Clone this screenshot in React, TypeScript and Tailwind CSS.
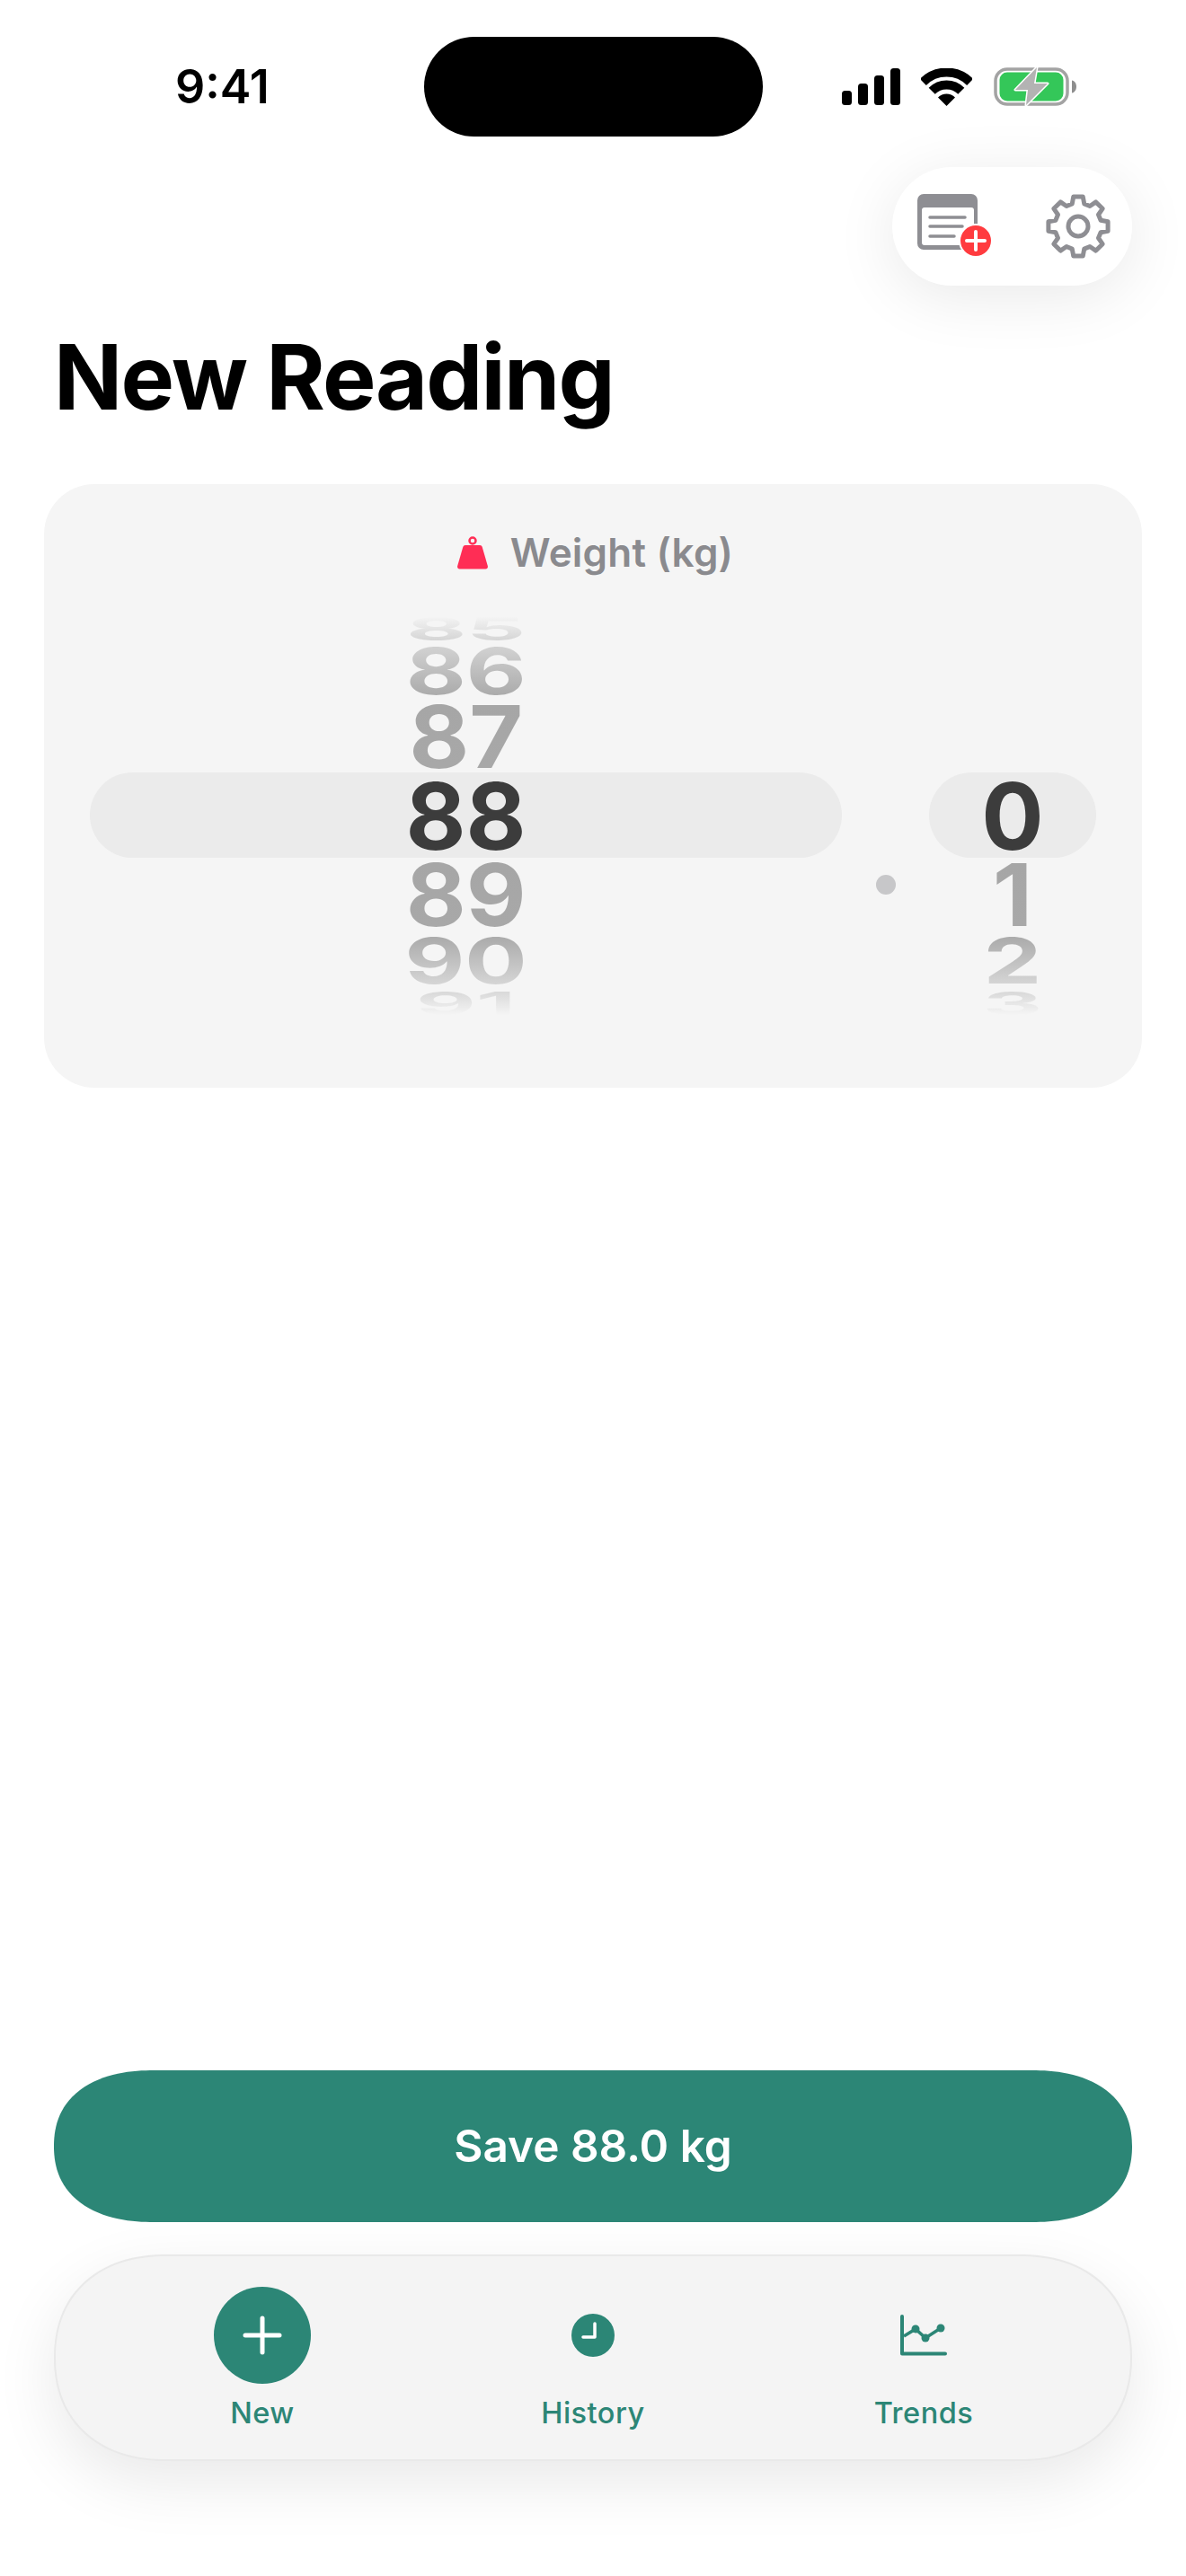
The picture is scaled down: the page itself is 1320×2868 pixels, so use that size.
import React from 'react';

const gearPath = () => {
  const cx = 40;
  const cy = 40;
  const pts: string[] = [];
  for (let i = 0; i < 8; i++) {
    const a = (i * 45 - 90) * (Math.PI / 180);
    const step = (deg: number, r: number) => {
      const t = a + deg * (Math.PI / 180);
      pts.push(`${(cx + r * Math.cos(t)).toFixed(2)} ${(cy + r * Math.sin(t)).toFixed(2)}`);
    };
    step(-15, 26);
    step(-9, 33.500);
    step(9, 33.500);
    step(15, 26);
  }
  return 'M' + pts.join('L') + 'Z';
};

const StatusIcons = () => (
  <div className="flex items-center">
    <svg width="65" height="41" viewBox="0 0 65 41" fill="#000">
      <rect x="0" y="25" width="11" height="16" rx="3.5" />
      <rect x="18" y="17" width="11" height="24" rx="3.5" />
      <rect x="36" y="8" width="11" height="33" rx="3.5" />
      <rect x="54" y="0" width="11" height="41" rx="3.5" />
    </svg>
    <svg className="ml-[23px]" width="57" height="42" viewBox="0 0 57 42">
      <path d="M2.3 15.4A37 37 0 0 1 54.7 15.4" fill="none" stroke="#000" strokeWidth="10" />
      <path d="M12.2 25.2A23 23 0 0 1 44.8 25.2" fill="none" stroke="#000" strokeWidth="10" />
      <path d="M28.5 42L19 32.5A13.4 13.4 0 0 1 38 32.5Z" fill="#000" />
    </svg>
    <svg className="ml-[24px]" width="92" height="43" viewBox="0 0 92 43">
      <rect x="2" y="2" width="80" height="39" rx="13" fill="none" stroke="#a3a3a3" strokeWidth="3.5" />
      <rect x="6.5" y="5.5" width="71" height="32" rx="8.5" fill="#34c759" />
      <path d="M87 14.5c3 .6 5 3.400 5 7s-2 6.400-5 7z" fill="#8e8e8e" />
      <path d="M48 0L24 25H38L36 42L60 18H45Z" fill="#b3b3b3" stroke="#fff" strokeWidth="3" strokeLinejoin="round" paintOrder="stroke" />
    </svg>
  </div>
);

const ReportIcon = () => (
  <svg width="86" height="72" viewBox="0 0 86 72">
    <rect x="0" y="0" width="67" height="62" rx="7" fill="#8e8e93" />
    <rect x="5" y="15" width="58" height="42" rx="3" fill="#fff" />
    <path d="M14 26H53M14 36H50M14 47H41" stroke="#8e8e93" strokeWidth="3.500" strokeLinecap="round" />
    <circle cx="65" cy="52" r="19" fill="#fff" />
    <circle cx="65" cy="52" r="17" fill="#ff3b3f" />
    <path d="M55 52H75M65 42V62" stroke="#fff" strokeWidth="4" strokeLinecap="round" />
  </svg>
);

const GearIcon = () => (
  <svg width="80" height="80" viewBox="0 0 80 80" fill="none" stroke="#8e8e93" strokeWidth="5" strokeLinejoin="round">
    <path d={gearPath()} />
    <circle cx="40" cy="40" r="11" />
  </svg>
);

const WeightIcon = () => (
  <svg width="34" height="38" viewBox="0 0 34 38">
    <circle cx="17" cy="6" r="3.500" fill="none" stroke="#ff2d55" strokeWidth="2.500" />
    <path d="M9 11H25C26.500 11 27.300 11.800 27.700 13L33.800 34C34.300 36 33.300 37.500 31.500 37.500H2.500C.700 37.500-.300 36 .200 34L6.300 13C6.700 11.800 7.500 11 9 11Z" fill="#ff2d55" />
  </svg>
);

const digitBase = "inline-block text-[103px] leading-none font-bold bg-clip-text text-transparent";

const LeftWheel = () => (
  <div className="flex flex-col items-center relative z-10">
    <div className="h-[37px] flex items-center"><span className={`${digitBase} scale-y-[0.35] bg-gradient-to-b from-[#f4f4f4] from-15% to-[#d6d6d6] to-85%`}>85</span></div>
    <div className="h-[58px] flex items-center"><span className={`${digitBase} scale-y-[0.69] bg-gradient-to-b from-[#d0d0d0] from-15% to-[#acacac] to-85%`}>86</span></div>
    <div className="h-[88px] flex items-center"><span className={`${digitBase} scale-y-[0.93] bg-gradient-to-b from-[#a6a6a6] from-15% to-[#a8a8a8] to-85%`}>87</span></div>
    <div className="h-[88px] flex items-center"><span className={`${digitBase} bg-gradient-to-b from-[#3c3c3c] to-[#3c3c3c]`}>88</span></div>
    <div className="h-[88px] flex items-center"><span className={`${digitBase} scale-y-[0.93] bg-gradient-to-b from-[#a6a6a6] from-15% to-[#a8a8a8] to-85%`}>89</span></div>
    <div className="h-[59px] flex items-center"><span className={`${digitBase} scale-y-[0.68] bg-gradient-to-b from-[#acacac] from-15% to-[#d4d4d4] to-85%`}>90</span></div>
    <div className="h-[34px] flex items-center"><span className={`${digitBase} scale-y-[0.35] bg-gradient-to-b from-[#d8d8d8] from-15% to-[#f4f4f4] to-85%`}>91</span></div>
  </div>
);

const RightWheel = () => (
  <div className="flex flex-col items-center relative z-10">
    <div className="h-[183px]" />
    <div className="h-[88px] flex items-center"><span className={`${digitBase} bg-gradient-to-b from-[#3c3c3c] to-[#3c3c3c]`}>0</span></div>
    <div className="h-[88px] flex items-center"><span className={`${digitBase} scale-y-[0.93] bg-gradient-to-b from-[#a6a6a6] from-15% to-[#a8a8a8] to-85%`}>1</span></div>
    <div className="h-[59px] flex items-center"><span className={`${digitBase} scale-y-[0.68] bg-gradient-to-b from-[#acacac] from-15% to-[#d4d4d4] to-85%`}>2</span></div>
    <div className="h-[34px] flex items-center"><span className={`${digitBase} scale-y-[0.35] bg-gradient-to-b from-[#d8d8d8] from-15% to-[#f4f4f4] to-85%`}>3</span></div>
  </div>
);

const TabItem = ({ label, children }: { label: string; children: React.ReactNode }) => (
  <div className="flex flex-col items-center">
    <div className="h-[124px] flex items-center justify-center">{children}</div>
    <span className="mt-[3px] text-[32.5px] leading-[44px] font-medium text-[#2c8676] tracking-[0.5px]">{label}</span>
  </div>
);

export default function App() {
  return (
    <div className="relative w-[1320px] h-[2868px] bg-white flex flex-col overflow-hidden font-['Inter',sans-serif]">
      {/* dynamic island */}
      <div className="absolute left-[472px] top-[41px] w-[377px] h-[111px] rounded-full bg-black" />

      <div className="h-[186px] flex justify-between items-start pl-[195px] pr-[122px] pt-[70px]">
        <span className="text-[52px] leading-[54px] font-semibold text-black">9:41</span>
        <div className="mt-[5px]">
          <StatusIcons />
        </div>
      </div>

      <div className="flex justify-end pr-[60px]">
        <div className="w-[267px] h-[132px] rounded-full bg-white shadow-[0_12px_70px_rgba(0,0,0,0.09)] flex items-start pl-[28px] pt-[30px]">
          <ReportIcon />
          <div className="ml-[53px] -mt-[4px]">
            <GearIcon />
          </div>
        </div>
      </div>

      <h1 className="pl-[60px] mt-[42px] text-[100px] leading-[120px] font-bold text-black tracking-[-1.7px]">New Reading</h1>

      <div className="mx-[49px] mt-[59px] h-[672px] rounded-[56px] bg-[#f5f5f5] px-[51px] pt-[56px]">
        <div className="flex items-center justify-center h-[40px] pl-[5px]">
          <WeightIcon />
          <span className="ml-[25px] text-[44px] leading-none font-semibold text-[#8a8a8e] tracking-[0.2px]">Weight (kg)</span>
        </div>
        <div className="mt-[46px] flex">
          <div className="relative w-[838px] h-[452px] flex justify-center">
            <div className="absolute left-0 right-0 top-[179px] h-[95px] rounded-full bg-[#ebebeb]" />
            <LeftWheel />
          </div>
          <div className="w-[97px] flex justify-center pt-[293px]">
            <div className="w-[22px] h-[22px] rounded-full bg-[#c7c7c9]" />
          </div>
          <div className="relative w-[186px] h-[452px] flex justify-center">
            <div className="absolute left-0 right-0 top-[179px] h-[95px] rounded-full bg-[#ebebeb]" />
            <RightWheel />
          </div>
        </div>
      </div>

      <div className="mt-auto px-[60px] pb-[128px]">
        <button className="w-full h-[169px] rounded-[112px/85px] [corner-shape:superellipse(1.2)] bg-[#2c8676] text-white text-[49.5px] font-semibold">Save 88.0 kg</button>
        <nav className="mt-[36px] h-[230px] rounded-[125px/115px] [corner-shape:superellipse(1.15)] bg-[#f4f4f4] border-2 border-[#e9e9e9] shadow-[0_24px_70px_rgba(0,0,0,0.09)] px-[46px] pt-[26px] grid grid-cols-3">
          <TabItem label="New">
            <div className="w-[108px] h-[108px] rounded-full bg-[#2c8676] flex items-center justify-center">
              <svg width="44" height="44" viewBox="0 0 44 44" stroke="#fff" strokeWidth="5" strokeLinecap="round">
                <path d="M22 3V41M3 22H41" />
              </svg>
            </div>
          </TabItem>
          <TabItem label="History">
            <svg width="50" height="50" viewBox="0 0 50 50">
              <circle cx="25" cy="25" r="24" fill="#2c8676" />
              <path d="M27 12V27H14" fill="none" stroke="#fff" strokeWidth="3.500" strokeLinecap="round" strokeLinejoin="round" />
            </svg>
          </TabItem>
          <TabItem label="Trends">
            <svg width="52" height="46" viewBox="0 0 52 46" fill="#2c8676">
              <path d="M2 2V43.500H50" fill="none" stroke="#2c8676" strokeWidth="4" strokeLinecap="round" strokeLinejoin="round" />
              <path d="M4 24L17 16L28 26L45 15" fill="none" stroke="#2c8676" strokeWidth="3.500" />
              <circle cx="17" cy="16" r="4.500" />
              <circle cx="28" cy="26" r="4.500" />
              <circle cx="45" cy="15" r="4.500" />
            </svg>
          </TabItem>
        </nav>
      </div>
    </div>
  );
}
